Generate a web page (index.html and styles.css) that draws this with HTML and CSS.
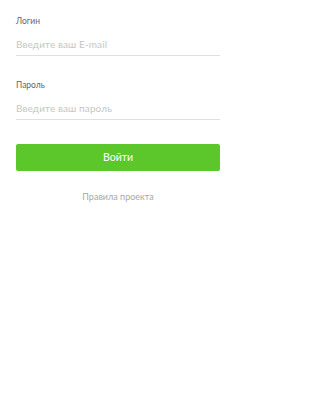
FILE: index.html
```html
<!DOCTYPE html>
<html lang="ru">
<head>
<meta charset="utf-8">
<title>Вход</title>
<link rel="stylesheet" href="styles.css">
</head>
<body>
<main class="form">
  <div class="field">
    <div class="label">Логин</div>
    <div class="input">Введите ваш E-mail</div>
  </div>
  <div class="field field-next">
    <div class="label">Пароль</div>
    <div class="input">Введите ваш пароль</div>
  </div>
  <div class="button">Войти</div>
  <div class="rules">Правила проекта</div>
</main>
</body>
</html>
```

FILE: styles.css
```css
html, body {
  margin: 0;
  padding: 0;
  background: #ffffff;
}
body {
  font-family: Lato, "Open Sans", "Liberation Sans", sans-serif;
  width: 236px;
  height: 420px;
}
.form {
  display: flex;
  flex-direction: column;
  padding: 16px 16px 0;
}
.field {
  display: flex;
  flex-direction: column;
}
.field-next {
  margin-top: 24px;
}
.label {
  font-size: 8.5px;
  line-height: 10px;
  height: 10px;
  color: #666666;
}
.input {
  margin-top: 11px;
  font-size: 10px;
  line-height: 14px;
  height: 14px;
  padding-bottom: 4px;
  color: #c6c6c6;
  letter-spacing: 0.1px;
  border-bottom: 1px solid #e0e0e0;
}
.button {
  margin-top: 24px;
  height: 27px;
  border-radius: 2px;
  background: #5bc72b;
  color: #ffffff;
  font-size: 10.5px;
  line-height: 27px;
  text-align: center;
}
.rules {
  margin-top: 21px;
  font-size: 9px;
  line-height: 10px;
  text-align: center;
  color: #a8a8a8;
}
```
